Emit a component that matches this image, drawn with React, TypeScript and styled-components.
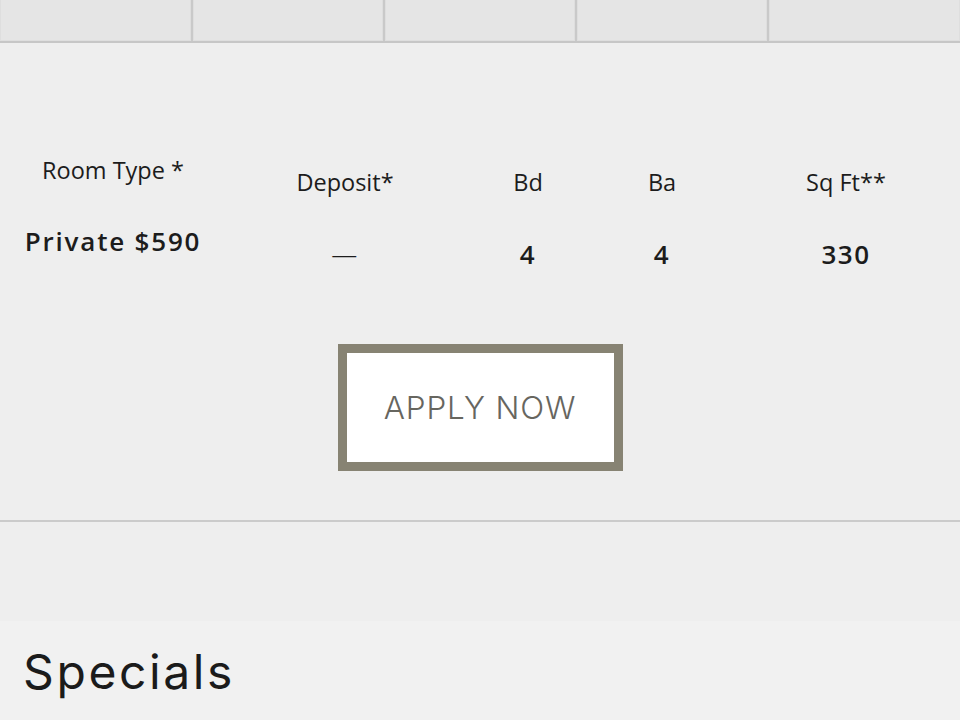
import React from "react";
import styled, { createGlobalStyle } from "styled-components";

const Global = createGlobalStyle`
  html, body { margin: 0; padding: 0; background: #eeeeee; }
  body { width: 960px; height: 720px; overflow: hidden; }
`;

const Page = styled.div`
  width: 960px;
  height: 720px;
  display: flex;
  flex-direction: column;
  background: #eeeeee;
  & > * { flex-shrink: 0; }
`;

const TabStrip = styled.div`
  display: grid;
  grid-template-columns: 193px 192px 192px 192px 1fr;
  height: 41px;
  border-bottom: 2px solid #c6c6c6;
  background: #e5e5e5;
`;

const Tab = styled.div<{ $last?: boolean }>`
  border-right: ${(p) => (p.$last ? "none" : "2px solid #c9c9c9")};
  box-shadow: inset -1px -1px 0 #dedede, inset 1px 0 0 #dedede;
`;

const Plan = styled.section`
  padding-top: 112px;
  height: 479px;
  box-sizing: border-box;
  border-bottom: 2px solid #cbcbcb;
  display: flex;
  flex-direction: column;
  align-items: center;
  & > * { flex-shrink: 0; }
`;

const Table = styled.div`
  width: 960px;
  display: grid;
  grid-template-columns: 226px 238px 128px 140px 1fr;
  grid-template-rows: 52px 66px;
  font-family: "Open Sans", "Noto Sans", sans-serif;
  color: #1c1c1c;
`;

const Head = styled.div<{ $first?: boolean }>`
  text-align: center;
  font-size: 23.5px;
  line-height: 30px;
  padding-top: ${(p) => (p.$first ? "0px" : "12px")};
`;

const Value = styled.div<{ $first?: boolean; $thin?: boolean }>`
  text-align: center;
  font-size: 26px;
  font-weight: ${(p) => (p.$thin ? 300 : 600)};
  letter-spacing: ${(p) => (p.$first ? "1.8px" : "1.5px")};
  line-height: 32px;
  padding-top: ${(p) => (p.$first ? "18px" : "31px")};
`;

const Button = styled.a`
  margin-top: 71px;
  width: 285px;
  height: 127px;
  box-sizing: border-box;
  border: 9px solid #878373;
  background: #ffffff;
  display: flex;
  align-items: center;
  justify-content: center;
  font-family: "Inter", "Lato", sans-serif;
  font-weight: 300;
  font-size: 31.5px;
  letter-spacing: 0.8px;
  color: #67665f;
  text-decoration: none;
`;

const Gap = styled.div`
  height: 99px;
`;

const Specials = styled.section`
  flex: 1;
  background: #f1f1f1;
  padding: 21px 23px 0;
`;

const Title = styled.h2`
  margin: 0;
  font-family: "Inter", sans-serif;
  font-weight: 400;
  font-size: 48px;
  letter-spacing: 2.6px;
  line-height: 60px;
  color: #1b1b1b;
`;

export default function App() {
  const heads = ["Room Type *", "Deposit*", "Bd", "Ba", "Sq Ft**"];
  const values = ["Private $590", "—", "4", "4", "330"];
  return (
    <>
      <Global />
      <Page>
        <TabStrip>
          {[0, 1, 2, 3, 4].map((i) => (
            <Tab key={i} $last={i === 4} />
          ))}
        </TabStrip>
        <Plan>
          <Table>
            {heads.map((h, i) => (
              <Head key={h} $first={i === 0}>
                {h}
              </Head>
            ))}
            {values.map((v, i) => (
              <Value key={i} $first={i === 0} $thin={v === "—"}>
                {v}
              </Value>
            ))}
          </Table>
          <Button href="#">APPLY NOW</Button>
        </Plan>
        <Gap />
        <Specials>
          <Title>Specials</Title>
        </Specials>
      </Page>
    </>
  );
}
